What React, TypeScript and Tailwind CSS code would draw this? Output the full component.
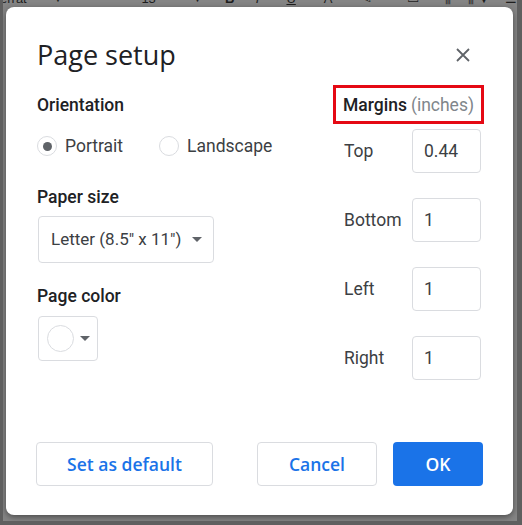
import React from 'react';

const margins = [
  { label: 'Top', value: '0.44' },
  { label: 'Bottom', value: '1' },
  { label: 'Left', value: '1' },
  { label: 'Right', value: '1' },
];

function Caret() {
  return (
    <svg width="10" height="5" viewBox="0 0 10 5" className="shrink-0">
      <path d="M0 0h10L5 5z" fill="#5f6368" />
    </svg>
  );
}

function Radio({ checked, label }: { checked?: boolean; label: string }) {
  return (
    <label className="flex items-center gap-[8px]">
      <span className="flex h-[20px] w-[20px] items-center justify-center rounded-full border-[1.5px] border-[#dadce0] bg-white">
        {checked && <span className="h-[9px] w-[9px] rounded-full bg-[#5f6368]" />}
      </span>
      <span className="text-[17.5px] leading-[24px] text-[#3c4043]">{label}</span>
    </label>
  );
}

function Toolbar() {
  // the dimmed docs toolbar peeking above the dialog
  return (
    <div className="h-[7px] overflow-hidden">
      <div className="-mt-[9px] flex items-center whitespace-nowrap text-[13px] leading-[16px] text-[#1e1e1e] [font-family:'Liberation_Sans',sans-serif]">
        <span className="-ml-[3px] w-[57px]">errat</span>
        <span className="w-[95px] text-[10px]">▼</span>
        <span className="w-[55px]">13</span>
        <span className="w-[35px] text-[10px]">▼</span>
        <span className="w-[33px] font-bold">B</span>
        <span className="w-[33px] italic">I</span>
        <span className="w-[40px] underline">U</span>
        <span className="w-[40px]">A</span>
        <span className="w-[50px]">✎</span>
        <span className="w-[40px]">▭</span>
        <span className="w-[25px]">⫼</span>
        <span className="w-[40px]">⫼ ▼</span>
        <span>☰</span>
      </div>
    </div>
  );
}

export default function App() {
  return (
    <div className="flex h-[525px] w-[522px] flex-col overflow-hidden border-b-[4px] border-l-[3px] border-r-[5px] border-[#5f5f5f] bg-[#858585] [font-family:Roboto,'Liberation_Sans',sans-serif]">
      <Toolbar />
      <div className="ml-[3px] flex h-[508px] w-[507px] flex-col rounded-[8px] bg-white px-[31px] pb-[29px] pt-[32px] shadow-[0_2px_6px_rgba(0,0,0,0.45)]">
        {/* header */}
        <div className="flex h-[32px] items-center justify-between">
          <h1 className="text-[27px] leading-[32px] text-[#202124] [font-family:'Open_Sans',Roboto,sans-serif]">
            Page setup
          </h1>
          <svg width="16" height="16" viewBox="0 0 16 16" className="mr-[11px]">
            <path d="M2 2l12 12M14 2L2 14" stroke="#5f6368" strokeWidth="1.8" />
          </svg>
        </div>

        <div className="mt-[14px] flex">
          {/* left column */}
          <div className="flex flex-1 flex-col">
            <div className="mt-[8px] text-[17.5px] font-medium leading-[24px] text-[#202124]">Orientation</div>
            <div className="mt-[17px] flex items-center gap-[36px]">
              <Radio checked label="Portrait" />
              <Radio label="Landscape" />
            </div>
            <div className="mt-[27px] text-[17.5px] font-medium leading-[24px] text-[#202124]">Paper size</div>
            <div className="ml-[1px] mt-[7px] flex h-[47px] w-[176px] items-center justify-between rounded-[4px] border border-[#dadce0] pl-[12px] pr-[11px]">
              <span className="text-[17px] text-[#3c4043]">Letter (8.5" x 11")</span>
              <Caret />
            </div>
            <div className="mt-[21px] text-[17.5px] font-medium leading-[24px] text-[#202124]">Page color</div>
            <div className="ml-[1px] mt-[8px] flex h-[45px] w-[60px] items-center gap-[6px] rounded-[4px] border border-[#dadce0] pl-[8px]">
              <span className="h-[27px] w-[27px] rounded-full border border-[#dadce0]" />
              <Caret />
            </div>
          </div>

          {/* right column */}
          <div className="-mr-[2px] flex w-[151px] flex-col">
            <div className="flex h-[39px] items-center border-[3px] border-[#e50914] pl-[7px] text-[17.5px] leading-[24px]">
              <span className="font-medium text-[#202124]">Margins</span>
              <span className="ml-[4px] text-[#80868b]">(inches)</span>
            </div>
            <div className="mt-[5px] flex flex-col gap-[25px]">
              {margins.map((m) => (
                <div key={m.label} className="flex items-center">
                  <span className="ml-[11px] w-[68px] text-[17.5px] text-[#3c4043]">{m.label}</span>
                  <div className="flex h-[44px] w-[69px] items-center rounded-[4px] border border-[#dadce0] pl-[11px] text-[17.5px] text-[#3c4043]">
                    {m.value}
                  </div>
                </div>
              ))}
            </div>
          </div>
        </div>

        {/* footer */}
        <div className="-mr-[1px] mt-auto flex items-center [font-family:'Open_Sans',Roboto,sans-serif]">
          <button className="-ml-[1px] h-[44px] w-[177px] rounded-[4px] border border-[#dadce0] text-[17.5px] font-semibold text-[#1a73e8]">
            Set as default
          </button>
          <button className="ml-auto h-[44px] w-[120px] rounded-[4px] border border-[#dadce0] text-[17.5px] font-semibold text-[#1a73e8]">
            Cancel
          </button>
          <button className="ml-[16px] h-[44px] w-[90px] rounded-[4px] bg-[#1a73e8] text-[17.5px] font-semibold text-white">
            OK
          </button>
        </div>
      </div>
    </div>
  );
}
